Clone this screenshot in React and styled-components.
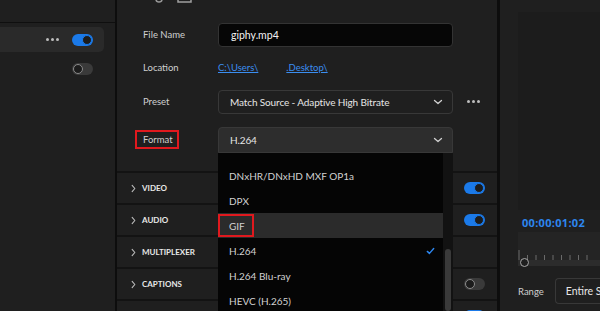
import React from "react";
import styled, { createGlobalStyle } from "styled-components";

const GlobalStyle = createGlobalStyle`
  html, body {
    margin: 0;
    padding: 0;
    background: #1f1f1f;
    overflow: hidden;
  }
  * {
    box-sizing: border-box;
  }
`;

const Screen = styled.div`
  display: flex;
  width: 600px;
  height: 311px;
  overflow: hidden;
  background: #1f1f1f;
  font-family: Lato, "Noto Sans", sans-serif;
  color: #d0d0d0;
`;

const LeftPanel = styled.aside`
  width: 117px;
  flex-shrink: 0;
  border-right: 2px solid #0d0d0d;
  display: flex;
  flex-direction: column;
`;

const LeftTop = styled.div`
  height: 23px;
  border-bottom: 1px solid #0f0f0f;
`;

const PresetItem = styled.div`
  margin-top: 4px;
  width: 104px;
  height: 25px;
  display: flex;
  align-items: center;
  justify-content: flex-end;
  gap: 13px;
  padding-right: 11px;
  background: ${(p) => (p.active ? "#2a2a2a" : "transparent")};
  border-radius: 0 5px 5px 0;
`;

const Dots = styled.span`
  display: inline-flex;
  gap: 2px;
  & > i {
    width: 3px;
    height: 3px;
    border-radius: 50%;
    background: #bdbdbd;
  }
`;

const Toggle = styled.span`
  position: relative;
  display: inline-block;
  width: 21px;
  height: 12px;
  border-radius: 6px;
  background: ${(p) => (p.on ? "#1b7ae9" : "#3a3a3a")};
  flex-shrink: 0;
  &::after {
    content: "";
    position: absolute;
    top: 1px;
    left: ${(p) => (p.on ? "10px" : "1px")};
    width: 10px;
    height: 10px;
    border-radius: 50%;
    box-sizing: border-box;
    background: #1c1c1c;
    border: 1.5px solid ${(p) => (p.on ? "#1b7ae9" : "#8a8a8a")};
  }
`;

const MiddlePanel = styled.main`
  position: relative;
  width: 383px;
  flex-shrink: 0;
  border-right: 3px solid #0d0d0d;
  display: flex;
  flex-direction: column;
  overflow: hidden;
  & > * {
    flex-shrink: 0;
  }
`;

const TopIcons = styled.div`
  height: 22px;
  display: flex;
  align-items: flex-start;
  gap: 14px;
  padding-left: 38px;
`;

const Form = styled.div`
  display: flex;
  flex-direction: column;
  padding-left: 26px;
`;

const Row = styled.div`
  display: flex;
  align-items: center;
  height: 25px;
  flex-shrink: 0;
  margin-top: ${(p) => p.gap || 0}px;
`;

const Label = styled.div`
  width: 75px;
  font-size: 9.5px;
  color: #cfcfcf;
`;

const Marked = styled.span`
  display: inline-block;
  margin-left: -8px;
  padding: 2px 4px 2px 6px;
  border: 2px solid #e0191e;
`;

const TextInput = styled.div`
  width: 235px;
  height: 24px;
  display: flex;
  align-items: center;
  padding-left: 12px;
  background: #060606;
  border: 1px solid #333;
  border-radius: 4px;
  color: #f2f2f2;
  font-size: 10.5px;
`;

const Links = styled.div`
  display: flex;
  gap: 28px;
  font-size: 9.5px;
`;

const PathLink = styled.a`
  color: #3b8ef0;
  text-decoration: underline;
`;

const Select = styled.div`
  width: 235px;
  height: ${(p) => (p.open ? 26 : 24)}px;
  display: flex;
  align-items: center;
  justify-content: space-between;
  padding: 0 9px 0 11px;
  background: ${(p) => (p.open ? "#2d2d2d" : "#1f1f1f")};
  border: 1px solid #383838;
  border-radius: ${(p) => (p.open ? "4px 4px 0 0" : "4px")};
  color: #e6e6e6;
  font-size: 10px;
  letter-spacing: -0.12px;
`;

const MoreButton = styled.span`
  margin-left: 14px;
  display: inline-flex;
`;

const Sections = styled.div`
  margin-top: 19px;
  display: flex;
  flex-direction: column;
`;

const Section = styled.div`
  height: 32px;
  flex-shrink: 0;
  display: flex;
  align-items: center;
  justify-content: space-between;
  padding: 0 12px 0 12px;
  border-top: 2px solid #131313;
`;

const SectionTitle = styled.div`
  display: flex;
  align-items: center;
  gap: 4px;
  font-size: 8px;
  font-weight: 700;
  color: #e8e8e8;
`;

const Popover = styled.div`
  position: absolute;
  left: 101px;
  top: 153px;
  width: 235px;
  bottom: 0;
  background: #050505;
  display: flex;
`;

const OptionList = styled.ul`
  list-style: none;
  margin: 0;
  padding: 10px 0 0;
  flex: 1;
`;

const Option = styled.li`
  position: relative;
  height: 25px;
  display: flex;
  align-items: center;
  justify-content: space-between;
  padding: 0 8px 0 11px;
  font-size: 10px;
  color: #d2d2d2;
  background: ${(p) => (p.hover ? "#2b2b2b" : "transparent")};
`;

const RedBox = styled.span`
  position: absolute;
  left: 0;
  top: 1px;
  width: 36px;
  height: 23px;
  border: 2px solid #e0191e;
`;

const ScrollGutter = styled.div`
  width: 10px;
  background: #121212;
  display: flex;
  flex-direction: column;
  justify-content: flex-end;
  align-items: center;
`;

const ScrollThumb = styled.div`
  width: 6px;
  height: 62px;
  border-radius: 3px;
  background: #3a3a3a;
`;

const RightPanel = styled.section`
  flex: 1;
  display: flex;
  flex-direction: column;
  padding-left: 18px;
  & > * {
    flex-shrink: 0;
  }
`;

const Preview = styled.div`
  margin-top: 12px;
  height: 198px;
  background: #1c1c1c;
`;

const Timecode = styled.div`
  margin-top: 5px;
  padding-left: 4px;
  font-size: 11px;
  font-weight: 700;
  letter-spacing: 0.3px;
  color: #2d86ee;
  font-family: "Open Sans", sans-serif;
`;

const Ruler = styled.div`
  margin-top: 2px;
  height: 28px;
  background: #242424;
  display: flex;
  align-items: flex-end;
`;

const Track = styled.div`
  position: relative;
  height: 6px;
  background: #2c2c2c;
`;

const Knob = styled.span`
  position: absolute;
  left: 2px;
  top: -2px;
  width: 9px;
  height: 9px;
  border-radius: 50%;
  background: #1f1f1f;
  border: 1.5px solid #a8a8a8;
`;

const RangeRow = styled.div`
  margin-top: 12px;
  display: flex;
  align-items: center;
  gap: 11px;
  font-size: 9.5px;
  color: #cfcfcf;
`;

const RangeSelect = styled.div`
  flex: 1;
  height: 26px;
  display: flex;
  align-items: center;
  padding-left: 10px;
  border: 1px solid #383838;
  border-right: none;
  border-radius: 4px 0 0 4px;
  font-size: 10.5px;
  color: #e6e6e6;
  white-space: nowrap;
  overflow: hidden;
`;

const Chevron = ({ dir = "down", color = "#d0d0d0", size = 10 }) => (
  <svg width={size} height={size} viewBox="0 0 10 10" fill="none">
    {dir === "down" ? (
      <path d="M1.5 3.5 L5 6.5 L8.5 3.5" stroke={color} strokeWidth="1.3" strokeLinecap="round" strokeLinejoin="round" />
    ) : (
      <path d="M3.5 1.5 L6.5 5 L3.5 8.5" stroke={color} strokeWidth="1.2" strokeLinecap="round" strokeLinejoin="round" />
    )}
  </svg>
);

const Check = () => (
  <svg width="9" height="8" viewBox="0 0 11 10" fill="none">
    <path d="M1.5 5.5 L4.2 8 L9.5 1.8" stroke="#2d86ee" strokeWidth="1.8" strokeLinecap="round" strokeLinejoin="round" />
  </svg>
);

const ThreeDots = () => (
  <Dots>
    <i />
    <i />
    <i />
  </Dots>
);

const ticks = Array.from({ length: 9 }, (_, i) => i);

const formats = [
  { name: "DNxHR/DNxHD MXF OP1a" },
  { name: "DPX" },
  { name: "GIF", hover: true, marked: true },
  { name: "H.264", checked: true },
  { name: "H.264 Blu-ray" },
  { name: "HEVC (H.265)" },
];

// the last row is only peeking in at the bottom edge, its title is below the fold
const sections = [
  { title: "VIDEO", toggle: "on" },
  { title: "AUDIO", toggle: "on" },
  { title: "MULTIPLEXER" },
  { title: "CAPTIONS", toggle: "off" },
  { title: "", toggle: "on" },
];

export default function App() {
  return (
    <>
      <GlobalStyle />
      <Screen>
        <LeftPanel>
          <LeftTop />
          <PresetItem active>
            <ThreeDots />
            <Toggle on />
          </PresetItem>
          <PresetItem>
            <Toggle />
          </PresetItem>
        </LeftPanel>

        <MiddlePanel>
          <TopIcons>
            <svg width="8" height="4" viewBox="0 8 8 4">
              <circle cx="4" cy="7" r="3" fill="none" stroke="#9a9a9a" strokeWidth="1.5" />
            </svg>
            <svg width="15" height="4" viewBox="0 10 15 4">
              <rect x="1" y="1" width="13" height="11" fill="none" stroke="#a0a0a0" strokeWidth="1.5" />
            </svg>
          </TopIcons>
          <Form>
            <Row>
              <Label>File Name</Label>
              <TextInput>giphy.mp4</TextInput>
            </Row>
            <Row gap={8}>
              <Label>Location</Label>
              <Links>
                <PathLink>C:\Users\</PathLink>
                <PathLink>.Desktop\</PathLink>
              </Links>
            </Row>
            <Row gap={9}>
              <Label>Preset</Label>
              <Select>
                Match Source - Adaptive High Bitrate
                <Chevron />
              </Select>
              <MoreButton>
                <ThreeDots />
              </MoreButton>
            </Row>
            <Row gap={13}>
              <Label>
                <Marked>Format</Marked>
              </Label>
              <Select open>
                H.264
                <Chevron />
              </Select>
            </Row>
          </Form>

          <Sections>
            {sections.map((s, i) => (
              <Section key={i}>
                <SectionTitle>
                  {s.title && <Chevron dir="right" color="#bdbdbd" size={9} />}
                  {s.title}
                </SectionTitle>
                {s.toggle && <Toggle on={s.toggle === "on"} />}
              </Section>
            ))}
          </Sections>

          <Popover>
            <OptionList>
              {formats.map((f) => (
                <Option key={f.name} hover={f.hover}>
                  {f.name}
                  {f.checked && <Check />}
                  {f.marked && <RedBox />}
                </Option>
              ))}
            </OptionList>
            <ScrollGutter>
              <ScrollThumb />
            </ScrollGutter>
          </Popover>
        </MiddlePanel>

        <RightPanel>
          <Preview />
          <Timecode>00:00:01:02</Timecode>
          <Ruler>
            <svg width="82" height="10" viewBox="0 0 82 10">
              {ticks.map((i) => (
                <line
                  key={i}
                  x1={1 + i * 8.5}
                  x2={1 + i * 8.5}
                  y1={i === 0 ? 0 : 5}
                  y2="10"
                  stroke="#6a6a6a"
                  strokeWidth="1"
                />
              ))}
            </svg>
          </Ruler>
          <Track>
            <Knob />
          </Track>
          <RangeRow>
            Range
            <RangeSelect>Entire Sequence</RangeSelect>
          </RangeRow>
        </RightPanel>
      </Screen>
    </>
  );
}
